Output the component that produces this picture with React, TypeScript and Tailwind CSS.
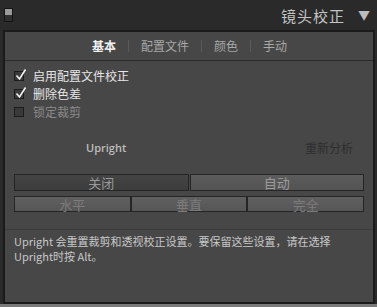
const cjk = "font-['Noto_Sans_CJK_SC','Noto_Sans',sans-serif]";

function CheckRow({ label, checked, dim }: { label: string; checked: boolean; dim?: boolean }) {
  return (
    <div className="flex h-[18px] items-center gap-[9px]">
      <span className="relative h-[10px] w-[10px] border border-[#1c1c1c] bg-[#3a3a3a]">
        {checked && (
          <svg viewBox="0 0 12 12" className="absolute left-[0px] top-[-4px] h-[13px] w-[12px]">
            <path d="M1.5 7 L4.5 10.5 L10.5 1" fill="none" stroke="#f2f2f2" strokeWidth="1.6" />
          </svg>
        )}
      </span>
      <span className={`text-[12px] leading-none ${dim ? "text-[#8a8a8a]" : "text-[#e6e6e6]"}`}>{label}</span>
    </div>
  );
}

function Btn({ label, tone }: { label: string; tone: "dark" | "mid" | "light" }) {
  const fill =
    tone === "dark"
      ? "bg-[linear-gradient(#444,#3d3d3d)] text-[#9a9a9a]"
      : tone === "mid"
        ? "bg-[linear-gradient(#5c5c5c,#535353)] text-[#9c9c9c]"
        : "bg-[linear-gradient(#606060,#565656)] text-[#7c7c7c]";
  return (
    <div className={`flex flex-1 items-center justify-center border border-[#252525] text-[13px] leading-none ${fill}`}>
      {label}
    </div>
  );
}

export default function App() {
  return (
    <div className={`relative h-[307px] w-[377px] overflow-hidden bg-[#2a2a2a] ${cjk}`}>
      <div className="flex h-[30px] items-center justify-between pl-[4px] pr-[7px]">
        <div className="flex h-[14px] w-[9px] flex-col border border-[#151515] bg-[#303030]">
          <div className="h-[6px] bg-[#9a9a9a]" />
        </div>
        <div className="flex items-center gap-[13px]">
          <span className="text-[15px] leading-none tracking-[1px] text-[#c4c4c4]">镜头校正</span>
          <span className="text-[12px] leading-none text-[#bdbdbd]">▼</span>
        </div>
      </div>
      <div className="ml-[3px] flex h-[274px] w-[372px] flex-col border-2 border-[#1b1b1b] bg-[#474747]">
        <div className="flex h-[29px] items-center justify-center border-b border-[#2a2a2a] pl-[1px] text-[12px] leading-none">
          <span className="font-bold text-[#f0f0f0]">基本</span>
          <span className="mx-[12px] h-[12px] w-px bg-[#5a5a5a]" />
          <span className="text-[#a8a8a8]">配置文件</span>
          <span className="mx-[12px] h-[12px] w-px bg-[#5a5a5a]" />
          <span className="text-[#a8a8a8]">颜色</span>
          <span className="mx-[12px] h-[12px] w-px bg-[#5a5a5a]" />
          <span className="text-[#a8a8a8]">手动</span>
        </div>
        <div className="flex flex-col pl-[9px] pt-[6px]">
          <CheckRow label="启用配置文件校正" checked />
          <CheckRow label="删除色差" checked />
          <CheckRow label="锁定裁剪" checked={false} dim />
        </div>
        <div className="mt-[18px] flex items-center justify-between pl-[81px] pr-[20px]">
          <span className="font-['Open_Sans',sans-serif] text-[11px] font-semibold text-[#bdbdbd]">Upright</span>
          <span className="text-[12px] text-[#2e2e2e]">重新分析</span>
        </div>
        <div className="mt-[17px] flex flex-col gap-[5px] px-[9px]">
          <div className="flex h-[17px] gap-[1px]">
            <Btn label="关闭" tone="dark" />
            <Btn label="自动" tone="mid" />
          </div>
          <div className="flex h-[16px]">
            <Btn label="水平" tone="light" />
            <Btn label="垂直" tone="light" />
            <Btn label="完全" tone="light" />
          </div>
        </div>
        <div className="mt-[17px] border-t border-[#3c3c3c] px-[9px] pt-[4px] text-[11px] leading-[15px] text-[#c8c8c8]">
          <p>Upright 会重置裁剪和透视校正设置。要保留这些设置，请在选择</p>
          <p>Upright时按 Alt。</p>
        </div>
      </div>
      <div className="absolute bottom-0 left-0 h-[3px] w-full bg-[#7a7a7a]" />
    </div>
  );
}
